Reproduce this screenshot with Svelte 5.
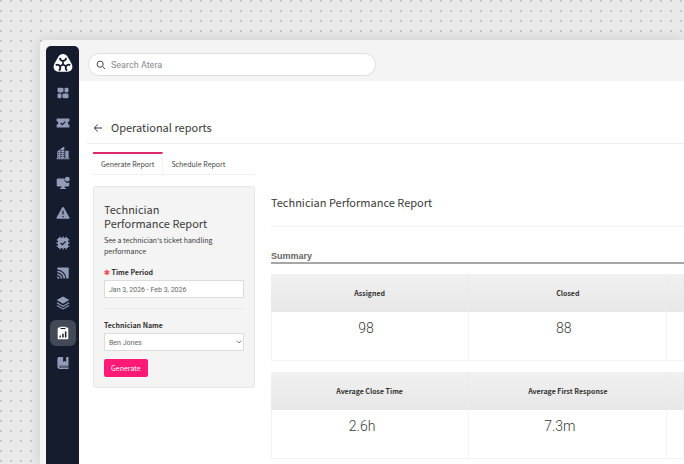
<script>
  // Operational reports page: nav rail, search bar, report form and summary tables.

  let search = $state('');
  let period = $state('Jan 3, 2026 - Feb 3, 2026');
  let technician = $state('Ben Jones');
  let tab = $state('Generate Report');

  const tabs = ['Generate Report', 'Schedule Report'];
  const nav = [
    { id: 'dashboard', label: 'Dashboard' },
    { id: 'tickets', label: 'Tickets' },
    { id: 'customers', label: 'Customers' },
    { id: 'devices', label: 'Devices' },
    { id: 'alerts', label: 'Alerts' },
    { id: 'patches', label: 'Patch management' },
    { id: 'network', label: 'Network discovery' },
    { id: 'apps', label: 'App center' },
    { id: 'reports', label: 'Reports', active: true },
    { id: 'knowledge', label: 'Knowledge base' }
  ];

  const tables = [
    [
      { name: 'Assigned', value: '98' },
      { name: 'Closed', value: '88' }
    ],
    [
      { name: 'Average Close Time', value: '2.6h' },
      { name: 'Average First Response', value: '7.3m' }
    ]
  ];
</script>

{#snippet icon(id)}
  <svg class="icon" viewBox="0 0 14 14" aria-hidden="true">
    {#if id === 'dashboard'}
      <rect x="1.5" y="1.7" width="6" height="4.7" rx="1.4" />
      <rect x="8.5" y="1.7" width="4" height="4.7" rx="1.4" />
      <rect x="1.5" y="7.4" width="4" height="4.9" rx="1.4" />
      <rect x="6.5" y="7.4" width="6" height="4.9" rx="1.4" />
    {:else if id === 'tickets'}
      <path d="M.6 2.6h12.8v2.7a1.7 1.7 0 0 0 0 3.4v2.7H.6V8.700a1.700 1.700 0 0 0 0-3.400z" />
      <path class="cut" d="M4.700 7l1.600 1.600 3.100-3" />
    {:else if id === 'customers'}
      <path d="M.5 12.200h13v1H.5zM1.300 5.400L4 3.600V12H1.300zM4.500 2.800L8.300.600V12H4.500zM9.300 4.700h3.300V12H9.300z" />
      <path class="dots" d="M2.700 6v5M5.600 4v7M7.200 4v7" />
    {:else if id === 'devices'}
      <path d="M1.700 2.400h7a3.200 3.200 0 0 0 4.500 4v3.100a1 1 0 0 1-1 1H8.600V12H10v1.100H4V12h1.400v-1.500H1.700a1 1 0 0 1-1-1V3.400a1 1 0 0 1 1-1z" />
      <circle cx="11.300" cy="3.200" r="2.400" />
    {:else if id === 'alerts'}
      <path d="M7 .9c.4 0 .7.200.900.600l5.500 9.900c.4.700 0 1.400-.8 1.400H1.400c-.8 0-1.200-.7-.8-1.400l5.500-9.900c.2-.4.500-.6.900-.6z" />
      <path class="cut" d="M7 4.700v3.800M7 9.900v1.400" />
    {:else if id === 'patches'}
      <path d="M2 2h10v10H2zM3.200.7h1.400V2H3.200zM6.300.5h1.400V2H6.300zM9.400.7h1.400V2H9.400zM3.200 12h1.400v1.300H3.200zM6.300 12h1.400v1.500H6.300zM9.400 12h1.400v1.300H9.400zM.7 3.200H2v1.400H.7zM.5 6.300H2v1.400H.5zM.7 9.400H2v1.400H.7zM12 3.200h1.300v1.400H12zM12 6.300h1.500v1.400H12zM12 9.400h1.300v1.400H12z" />
      <path class="cut" d="M4.600 7l1.700 1.700 3.200-3.200" />
    {:else if id === 'network'}
      <path d="M1.300 1.500h11.400v11H1.300z" />
      <path class="cut" d="M1 4.200a8.600 8.600 0 0 1 8.800 8.600M1 6.900a5.900 5.900 0 0 1 6 5.900M1 9.600a3.300 3.300 0 0 1 3.300 3.200" />
    {:else if id === 'apps'}
      <path d="M7 .4l6.400 3.700L7 7.800.6 4.100z" />
      <path class="line" d="M.9 6.700L7 10.200l6.100-3.500M.9 9.400L7 12.900l6.100-3.500" />
    {:else if id === 'reports'}
      <path d="M2.600 1.600h1.700V.7h5.400v.9h1.700c.5 0 .9.400.9.900v9.900c0 .5-.4.900-.9.900H2.600a.9.900 0 0 1-.9-.9V2.500c0-.5.4-.9.900-.9z" />
      <path class="bar" d="M4.600 1.900h4.800v1H4.600zM3.500 9.500h1.400v2.100H3.500zM6.200 7.700h1.500v3.900H6.200zM8.900 5.400h1.500v6.200H8.900z" />
    {:else}
      <path d="M3 1.100h9.500v8.700H3.700v2h8.800v1.100H3.200a1.800 1.800 0 0 1-1.800-1.800V2.700C1.400 1.800 2.100 1.100 3 1.100z" />
      <path class="bar" d="M7.100 1.100h3v5L8.600 5 7.100 6.100z" />
      <path d="M4.500 10.400h8v1h-8z" />
    {/if}
  </svg>
{/snippet}

<div class="stage">
  <div class="window">
    <nav class="rail" aria-label="Main">
      <a class="logo" href="#home" aria-label="Atera">
        <svg viewBox="0 0 20 20" aria-hidden="true">
          <path
            class="logo__shape"
            d="M10 1c2.100 0 3.500.9 4.600 2.700l3.900 6.900c2.100 3.900.4 7.900-3.900 8.100H5.400c-4.300-.2-6-4.200-3.900-8.100l3.900-6.900C6.500 1.900 7.900 1 10 1z"
          />
          <!-- one arm, turned about the centre of the triangle -->
          {#each [0, 120, 240] as turn}
            <path class="logo__cut" transform={`rotate(${turn} 10 11.500)`} d="M6.900 4.900c.2 2 1.300 3 3.100 3s2.900-1 3.100-3M10 7.900v3.600" />
          {/each}
        </svg>
      </a>
      {#each nav as item (item.id)}
        <a class="rail__item" class:rail__item--active={item.active} href={`#${item.id}`} aria-label={item.label}>
          {@render icon(item.id)}
        </a>
      {/each}
    </nav>

    <div class="page">
      <header class="topbar">
        <label class="search">
          <svg viewBox="0 0 12 12" aria-hidden="true">
            <circle cx="5" cy="5" r="3.700" />
            <path d="M7.800 7.800l3 3" />
          </svg>
          <input type="search" placeholder="Search Atera" aria-label="Search Atera" bind:value={search} />
        </label>
      </header>

      <main>
        <div class="heading">
          <a class="back" href="#reports" aria-label="Back">
            <svg viewBox="0 0 10 10" aria-hidden="true"><path d="M9 5H1.200M4.700 1.500L1.200 5l3.500 3.500" /></svg>
          </a>
          <h1>Operational reports</h1>
        </div>

        <div class="columns">
          <section class="side">
            <div class="tabs" role="tablist">
              {#each tabs as name (name)}
                <button
                  type="button"
                  role="tab"
                  class="tab"
                  class:tab--active={tab === name}
                  aria-selected={tab === name}
                  onclick={() => (tab = name)}>{name}</button>
              {/each}
            </div>

            <form class="card" onsubmit={(e) => e.preventDefault()}>
              <h2>Technician<br />Performance Report</h2>
              <p>See a technician's ticket handling performance</p>

              <label for="period"><span class="required">✱</span> Time Period</label>
              <input id="period" class="field" type="text" bind:value={period} />

              <hr />

              <label for="technician">Technician Name</label>
              <div class="select">
                <select id="technician" class="field" bind:value={technician}>
                  <option>Ben Jones</option>
                </select>
                <svg viewBox="0 0 6 4" aria-hidden="true"><path d="M.7.700L3 3 5.300.700" /></svg>
              </div>

              <button type="submit" class="generate">Generate</button>
            </form>
          </section>

          <section class="report">
            <h2 class="report__title">Technician Performance Report</h2>
            <h3>Summary</h3>
            {#each tables as cells, i}
              <table class:averages={i === 1}>
                <thead>
                  <tr>
                    {#each cells as cell}<th scope="col">{cell.name}</th>{/each}
                    <td></td>
                  </tr>
                </thead>
                <tbody>
                  <tr>
                    {#each cells as cell}<td>{cell.value}</td>{/each}
                    <td></td>
                  </tr>
                </tbody>
              </table>
            {/each}
          </section>
        </div>
      </main>
    </div>
  </div>
</div>

<style>
  :global(body) {
    overflow: hidden;
  }

  .stage,
  .stage :global(*) {
    box-sizing: border-box;
  }

  .stage {
    --ink: #3a3a3a;
    --navy: #141c2e;
    --line: #efefef;
    --pink: #ff1a75;
    height: 100vh;
    overflow: hidden;
    padding: 40px 0 0 40px;
    background: radial-gradient(circle at 1px 1px, #777, transparent 1px) 0 0 / 10px 10px, #e9e9e9;
    font-family: 'Noto Sans CJK SC', 'Noto Sans', sans-serif;
    color: var(--ink);
  }

  h1,
  h2,
  h3,
  p {
    margin: 0;
    font-weight: 400;
  }

  .window {
    display: flex;
    height: 100%;
    padding-left: 6px;
    background: #f4f4f4;
    border-top-left-radius: 5px;
    box-shadow: 0 0 14px rgba(0, 0, 0, 0.13);
  }

  /* Navigation rail */
  .rail {
    display: flex;
    flex: none;
    flex-direction: column;
    align-items: center;
    gap: 4px;
    width: 33px;
    margin-top: 6px;
    padding-top: 4px;
    background: var(--navy);
    border-radius: 5px 5px 0 0;
  }

  .rail a {
    display: grid;
    place-items: center;
    flex: none;
    width: 26px;
    height: 26px;
    border-radius: 6px;
  }

  .logo svg {
    width: 20px;
    height: 20px;
  }

  .logo__shape { fill: #fff; }
  .logo__cut { fill: none; stroke: var(--navy); stroke-width: 1.7; }

  .icon {
    width: 14px;
    height: 14px;
    fill: #929bb8;
  }

  .icon .cut { fill: none; stroke: var(--navy); stroke-width: 1.2; }
  .icon .line { fill: none; stroke: #929bb8; stroke-width: 1.2; }
  .icon .dots { fill: none; stroke: var(--navy); stroke-width: 0.8; stroke-dasharray: 1 1; }
  .icon .bar { fill: var(--navy); }

  .rail__item--active { background: #434957; }
  .rail__item--active .icon { fill: #fff; }

  /* Top bar */
  .page {
    display: flex;
    flex: 1;
    flex-direction: column;
    min-width: 0;
  }

  .topbar {
    flex: none;
    padding: 13px 9px 5px;
  }

  .search {
    display: flex;
    align-items: center;
    gap: 5px;
    width: 49%;
    height: 23px;
    padding: 0 7px;
    background: #fff;
    border: 1px solid #dedede;
    border-radius: 12px;
  }

  .search svg {
    flex: none;
    width: 10px;
    height: 10px;
    fill: none;
    stroke: #444;
    stroke-width: 1.2;
  }

  .search input {
    flex: 1;
    min-width: 0;
    padding: 0;
    border: 0;
    outline: 0;
    background: none;
    font: 9px Roboto, sans-serif;
  }

  .search input::placeholder { color: #888; }

  main {
    flex: 1;
    padding-top: 37px;
    background: #fff;
  }

  .heading {
    display: flex;
    align-items: center;
    gap: 8px;
    margin-left: 8px;
    padding: 0 6px 6px;
    border-bottom: 1px solid var(--line);
  }

  .heading h1 {
    font-size: 11px;
    line-height: 19px;
  }

  .back svg {
    display: block;
    width: 10px;
    height: 10px;
    fill: none;
    stroke: #333;
  }

  .columns {
    display: grid;
    grid-template-columns: 162px minmax(0, 1fr);
    gap: 16px;
    padding: 8px 0 0 14px;
  }

  /* Tabs */
  .tabs {
    display: flex;
    border-bottom: 1px solid var(--line);
  }

  .tab {
    height: 22px;
    padding: 0 8px;
    border: 0;
    border-top: 2px solid transparent;
    border-right: 1px solid transparent;
    background: none;
    font: 7px/16px 'Noto Sans CJK SC', sans-serif;
    color: #444;
    white-space: nowrap;
  }

  .tab--active {
    border-top-color: #dc2b6b;
    border-right-color: #f4f4f4;
  }

  /* Report form */
  .card {
    margin-top: 11px;
    padding: 15px 10px 10px;
    background: #f4f4f4;
    border: 1px solid #e6e6e6;
    border-radius: 3px;
  }

  .card h2 {
    font-size: 11px;
    line-height: 14px;
  }

  .card p {
    margin-top: 5px;
    font-size: 7px;
    line-height: 11px;
  }

  .card label {
    display: block;
    margin: 10px 0 2px;
    font-size: 7px;
    font-weight: 700;
    line-height: 11px;
    color: #333;
  }

  .required { color: #f0545c; }

  .field {
    display: block;
    width: 100%;
    height: 18px;
    padding: 2px 4px 0;
    border: 1px solid #dcdcdc;
    border-radius: 0;
    background: #fff;
    font: 7px Roboto, sans-serif;
    color: #666;
    appearance: none;
  }

  .card hr {
    height: 1px;
    margin: 10px 0 11px;
    border: 0;
    background: #ebebeb;
  }

  .select { position: relative; }

  .select svg {
    position: absolute;
    top: 7px;
    right: 2px;
    width: 6px;
    height: 4px;
    fill: none;
    stroke: #666;
    stroke-width: 0.8;
  }

  .generate {
    display: block;
    height: 18px;
    margin-top: 8px;
    padding: 0 7px;
    border: 0;
    border-radius: 2px;
    background: var(--pink);
    font: 7px/18px 'Noto Sans CJK SC', sans-serif;
    color: #fff;
  }

  /* Report */
  .report__title {
    margin-top: 41px;
    padding-bottom: 14px;
    border-bottom: 1px solid var(--line);
    font-size: 11px;
    line-height: 19px;
  }

  .report h3 {
    margin-top: 24px;
    border-bottom: 2px solid #a6a6a6;
    font: 700 9px/11px 'Liberation Sans', sans-serif;
    color: #666;
  }

  table {
    width: 100%;
    margin-top: 10px;
    border-collapse: separate;
    border-spacing: 0;
    table-layout: fixed;
  }

  table + table { margin-top: 11px; }

  thead tr { background: linear-gradient(#f1f1f1, #e7e7e7); }

  th,
  thead td {
    width: 48%;
    height: 38px;
    padding: 0;
    border-right: 1px solid #ebebeb;
    font-size: 7px;
    line-height: 11px;
    color: #333;
  }

  thead td { width: 4%; }

  tbody td {
    height: 49px;
    padding: 7px 8px 0 0;
    border-right: 1px solid #f3f3f3;
    border-bottom: 1px solid #f3f3f3;
    font: 300 14px/18px Roboto, sans-serif;
    text-align: center;
    vertical-align: top;
  }

  tbody td:first-child { border-left: 1px solid #f3f3f3; }

  .averages tbody td { padding-right: 16px; }
</style>
